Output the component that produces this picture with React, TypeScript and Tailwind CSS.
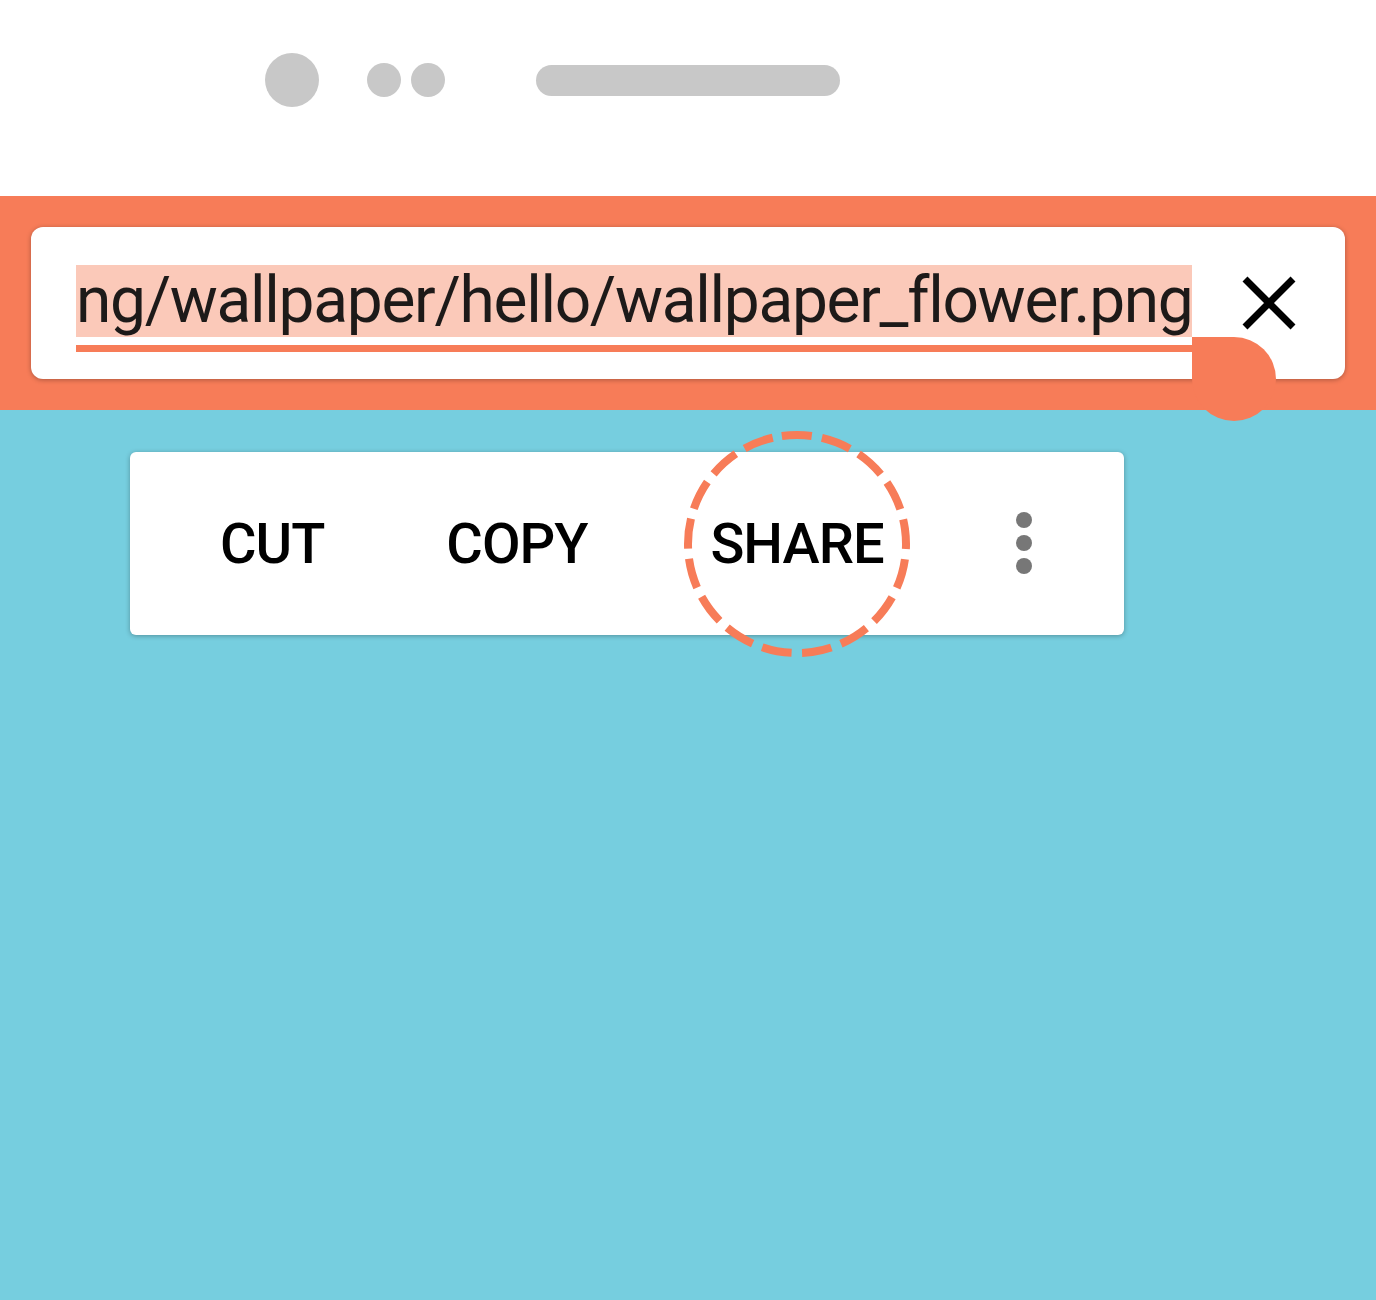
import React from 'react';

const App: React.FC = () => {
  const items = [
    { label: 'CUT', ml: 'ml-[90px]' },
    { label: 'COPY', ml: 'ml-[122px]' },
    { label: 'SHARE', ml: 'ml-[123px]' },
  ];

  return (
    <div className="w-[1376px] h-[1300px] flex flex-col bg-[#76cedf] font-['Roboto',sans-serif] overflow-hidden">
      {/* status bar placeholder */}
      <div className="h-[196px] bg-white flex items-start pl-[265px] pt-[53px]">
        <div className="flex items-center h-[54px]">
          <div className="w-[54px] h-[54px] rounded-full bg-[#c8c8c8]" />
          <div className="w-[34px] h-[34px] rounded-full bg-[#c8c8c8] ml-[48px]" />
          <div className="w-[34px] h-[34px] rounded-full bg-[#c8c8c8] ml-[10px]" />
          <div className="w-[304px] h-[31px] rounded-full bg-[#c8c8c8] ml-[91px]" />
        </div>
      </div>

      {/* url bar */}
      <div className="h-[214px] bg-[#f77c58] px-[31px] pt-[31px] relative z-10">
        <div className="relative h-[152px] bg-white rounded-[12px] shadow-[0_1px_5px_rgba(0,0,0,0.3)] flex items-start pl-[45px] pt-[38px]">
          <div className="w-[1116px] flex flex-col overflow-hidden">
            <div className="h-[72px] bg-[#fbc9b9] text-[#1d1a19] text-[64px] leading-[72px] tracking-[-1.3px] whitespace-nowrap">
              ng/wallpaper/hello/wallpaper_flower.png
            </div>
            <div className="h-[7px] bg-[#f77c58] mt-[8px]" />
          </div>
          <svg className="ml-[50px] mt-[11px]" width="54" height="54" viewBox="0 0 54 54">
            <path d="M3 3 L51 51 M51 3 L3 51" stroke="#000" strokeWidth="7" />
          </svg>
          <div className="absolute left-[1161px] top-[110px] w-[84px] h-[84px] bg-[#f77c58] rounded-full rounded-tl-none" />
        </div>
      </div>

      {/* floating text selection menu */}
      <div className="pl-[130px] pt-[42px]">
        <div className="relative w-[994px] h-[183px] bg-white rounded-[6px] shadow-[0_1px_5px_rgba(0,0,0,0.3)] flex items-center">
          {items.map((it) => (
            <span key={it.label} className={`${it.ml} text-[56px] font-medium text-black leading-none tracking-[-1px]`}>
              {it.label}
            </span>
          ))}
          <div className="absolute left-[886px] top-[60px] flex flex-col gap-[7px]">
            <div className="w-[16px] h-[16px] rounded-full bg-[#777]" />
            <div className="w-[16px] h-[16px] rounded-full bg-[#777]" />
            <div className="w-[16px] h-[16px] rounded-full bg-[#777]" />
          </div>
          <svg className="absolute left-[552px] top-[-23px]" width="230" height="230" viewBox="0 0 230 230">
            <circle cx="115" cy="115" r="109" fill="none" stroke="#f77c58" strokeWidth="8" strokeDasharray="30 10.3" transform="rotate(-98 115 115)" />
          </svg>
        </div>
      </div>
    </div>
  );
};

export default App;
